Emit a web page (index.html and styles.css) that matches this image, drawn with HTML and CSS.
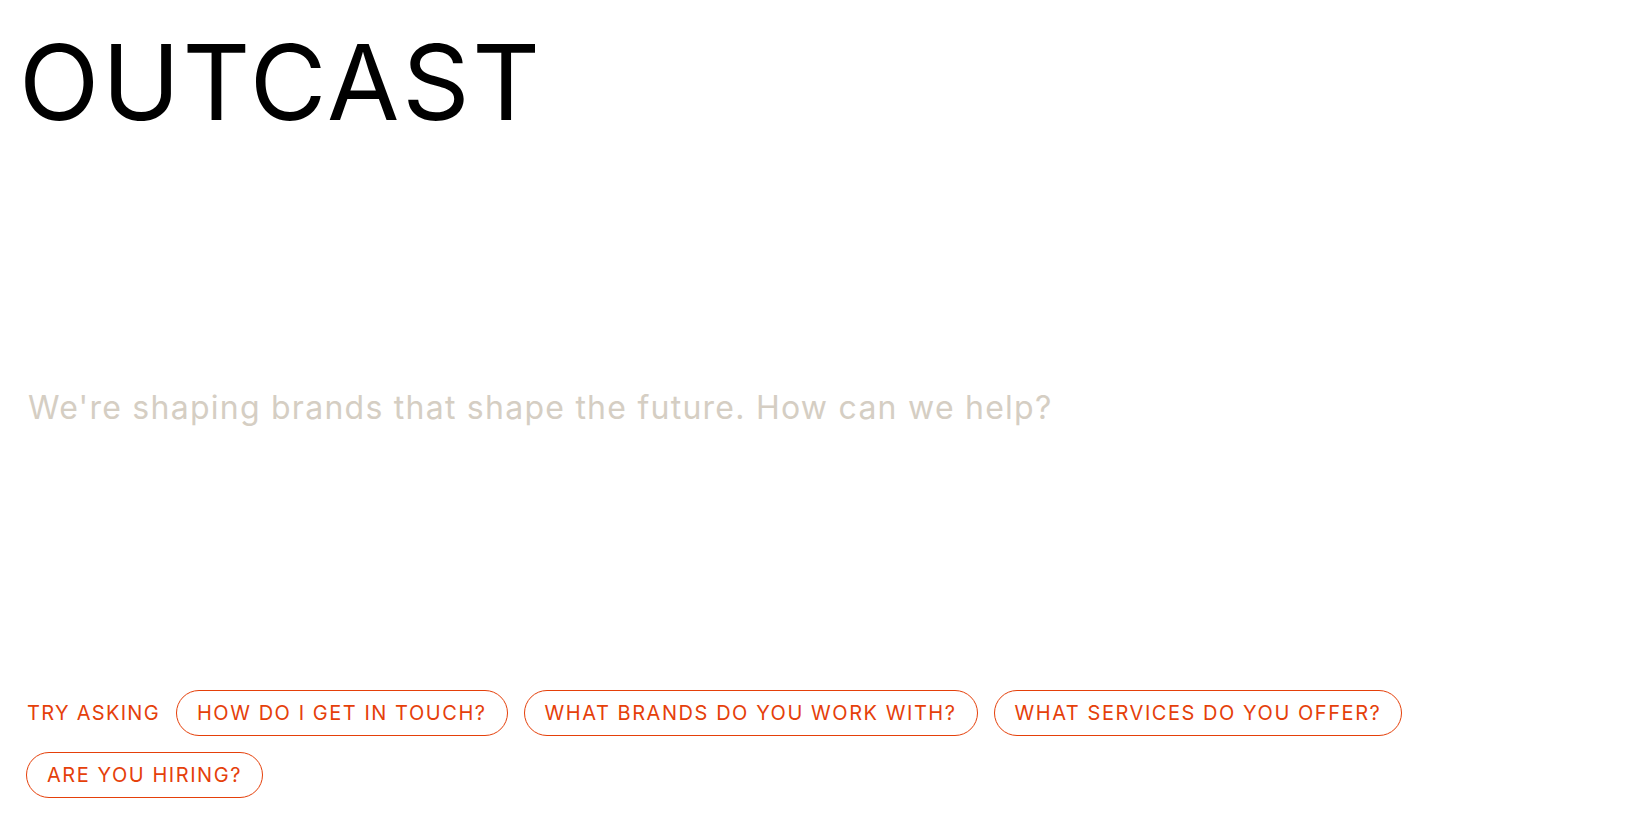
FILE: index.html
```html
<!DOCTYPE html>
<html lang="en">
<head>
<meta charset="utf-8">
<title>Outcast</title>
<link rel="stylesheet" href="styles.css">
</head>
<body>
<div class="page">
  <header class="header">
    <h1 class="logo">OUTCAST</h1>
  </header>
  <main class="main">
    <div class="prompt">We're shaping brands that shape the future. How can we help?</div>
  </main>
  <footer class="suggestions">
    <span class="label">TRY ASKING</span>
    <button class="chip">HOW DO I GET IN TOUCH?</button>
    <button class="chip">WHAT BRANDS DO YOU WORK WITH?</button>
    <button class="chip">WHAT SERVICES DO YOU OFFER?</button>
    <button class="chip">ARE YOU HIRING?</button>
  </footer>
</div>
</body>
</html>
```
FILE: styles.css
```css
html, body {
  margin: 0;
  padding: 0;
  background: #ffffff;
}
body {
  font-family: Inter, "Noto Sans", sans-serif;
  color: #000;
}
.page {
  height: 814px;
  display: flex;
  flex-direction: column;
  padding: 0 26px 16px 26px;
  box-sizing: border-box;
}
.header {
  padding-top: 29px;
}
.logo {
  margin: 0 0 0 -7px;
  font-size: 105px;
  font-weight: 400;
  line-height: 105px;
  letter-spacing: 2.6px;
}
.main {
  flex: 1;
  padding-top: 255px;
}
.prompt {
  font-size: 32px;
  color: #d5cec3;
  line-height: 38.4px;
  letter-spacing: 1.25px;
  padding-left: 2px;
}
.suggestions {
  display: flex;
  flex-wrap: wrap;
  align-items: center;
  gap: 16px;
}
.label {
  font-size: 20px;
  color: #e5400a;
  letter-spacing: 1.3px;
  padding-left: 1px;
}
.chip {
  font-family: inherit;
  font-size: 20px;
  letter-spacing: 1.55px;
  color: #e5400a;
  background: transparent;
  border: 1px solid #e5400a;
  border-radius: 23px;
  height: 46px;
  padding: 0 20px;
  cursor: pointer;
}
```
